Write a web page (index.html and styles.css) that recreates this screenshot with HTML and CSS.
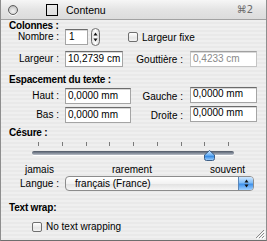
FILE: index.html
```html
<!DOCTYPE html>
<html>
<head>
  <title>Contenu</title>
  <link rel="stylesheet" href="styles.css">
</head>
<body>
  <div class="window">
    <div class="titlebar">
      <span class="collapse"></span>
      <span class="winbox"></span>
      <span class="title">Contenu</span>
      <span class="shortcut">&#8984;2</span>
    </div>

    <div class="panel">
      <div class="heading h-cols">Colonnes :</div>
      <div class="row r-nombre">
        <span class="lbl">Nombre :</span>
        <span class="field f-nombre">1</span>
        <span class="stepper">
          <svg width="9" height="18" viewBox="0 0 9 18">
            <defs>
              <linearGradient id="sg" x1="0" y1="0" x2="1" y2="0">
                <stop offset="0" stop-color="#dcdcdc"/>
                <stop offset="0.5" stop-color="#ffffff"/>
                <stop offset="1" stop-color="#d4d4d4"/>
              </linearGradient>
            </defs>
            <rect x="0.5" y="0.5" width="8" height="17" rx="4" fill="url(#sg)" stroke="#6f6f6f"/>
            <path d="M2.5 7.5 L4.5 4.5 L6.5 7.5 Z" fill="#111"/>
            <path d="M2.5 10.5 L4.5 13.5 L6.5 10.5 Z" fill="#111"/>
          </svg>
        </span>
        <span class="check c-fixe"><span class="box"></span>Largeur fixe</span>
      </div>
      <div class="row r-largeur">
        <span class="lbl">Largeur :</span>
        <span class="cell"><span class="field f-largeur">10,2739 cm</span></span>
        <span class="lbl2">Gouttière :</span>
        <span class="field f-right disabled">0,4233 cm</span>
      </div>

      <div class="heading h-esp">Espacement du texte :</div>
      <div class="row r-haut">
        <span class="lbl">Haut :</span>
        <span class="cell"><span class="field f-left">0,0000 mm</span></span>
        <span class="lbl2">Gauche :</span>
        <span class="field f-right raised">0,0000 mm</span>
      </div>
      <div class="row r-bas">
        <span class="lbl">Bas :</span>
        <span class="cell"><span class="field f-left">0,0000 mm</span></span>
        <span class="lbl2">Droite :</span>
        <span class="field f-right raised">0,0000 mm</span>
      </div>

      <div class="heading h-cesure">Césure :</div>
      <div class="slider">
        <div class="ticks">
          <i></i><i></i><i></i><i></i><i></i><i></i><i></i><i></i><i></i>
        </div>
        <div class="track"></div>
        <svg class="thumb" width="13" height="11" viewBox="0 0 13 11">
          <defs>
            <linearGradient id="tg" x1="0" y1="0" x2="0" y2="1">
              <stop offset="0" stop-color="#d6ecff"/>
              <stop offset="0.45" stop-color="#6fb2f4"/>
              <stop offset="0.6" stop-color="#3c8fe6"/>
              <stop offset="1" stop-color="#a6d4ff"/>
            </linearGradient>
          </defs>
          <path d="M6.5 0.5 L11.5 5 L11.5 8.5 Q11.5 10.5 9.5 10.5 L3.5 10.5 Q1.5 10.5 1.5 8.5 L1.5 5 Z" fill="url(#tg)" stroke="#3d5e86"/>
        </svg>
      </div>
      <div class="scale">
        <span>jamais</span>
        <span>rarement</span>
        <span>souvent</span>
      </div>

      <div class="row r-langue">
        <span class="lbl">Langue :</span>
        <div class="popup">
          <span class="popup-text">français (France)</span>
          <span class="popup-arrow">
            <svg width="5" height="9" viewBox="0 0 5 9">
              <path d="M0.5 3.5 L2.5 0.5 L4.5 3.5 Z" fill="#111"/>
              <path d="M0.5 5.5 L2.5 8.5 L4.5 5.5 Z" fill="#111"/>
            </svg>
          </span>
        </div>
      </div>

      <div class="heading h-wrap">Text wrap:</div>
      <div class="check c-wrap"><span class="box"></span>No text wrapping</div>
    </div>

    <svg class="grip" width="10" height="10" viewBox="0 0 10 10">
      <path d="M9 1 L1 9 M9 4 L4 9 M9 7 L7 9" stroke="#8a8a8a" stroke-width="1"/>
      <path d="M10 2 L2 10 M10 5 L5 10 M10 8 L8 10" stroke="#ffffff" stroke-width="1"/>
    </svg>
  </div>
</body>
</html>
```

FILE: styles.css
```css
body {
  margin: 0;
  font-family: "Liberation Sans", Arial, sans-serif;
  font-size: 10px;
  color: #000;
  background: #fff;
}

.window {
  position: relative;
  width: 267px;
  height: 241px;
  box-sizing: border-box;
  border-left: 1px solid #8e8e8e;
  border-right: 1px solid #8e8e8e;
  border-bottom: 1px solid #6e6e6e;
  background: repeating-linear-gradient(to bottom, #efefef 0, #efefef 2px, #e9e9e9 2px, #e9e9e9 4px);
  overflow: hidden;
}

.titlebar {
  height: 19px;
  border-bottom: 1px solid #a2a2a2;
  background: linear-gradient(to bottom, #f6f6f6, #e4e4e4 50%, #dcdcdc);
  display: flex;
  align-items: center;
  font-size: 10.5px;
}

.collapse {
  width: 8px;
  height: 8px;
  margin-left: 7px;
  border: 1px solid #5e5e5e;
  border-radius: 50%;
  background: radial-gradient(circle at 50% 65%, #f4f4f4 0, #cfcfcf 60%, #9c9c9c 100%);
  box-shadow: 0 1px 0 #fff;
}

.winbox {
  width: 10px;
  height: 10px;
  margin-left: 28px;
  border: 1px solid #000;
}

.title {
  margin-left: 8px;
  flex: 1;
}

.shortcut {
  margin-right: 13px;
  color: #6a6a6a;
  font-family: "DejaVu Sans", sans-serif;
  font-size: 10px;
}

.panel {
  padding-left: 8px;
}

.heading {
  font-weight: bold;
  line-height: 12px;
  letter-spacing: -0.2px;
}

.row {
  display: flex;
  align-items: center;
}

.lbl {
  width: 50px;
  margin-right: 6px;
  text-align: right;
  line-height: 12px;
}

.lbl2 {
  width: 52px;
  margin-right: 7px;
  text-align: right;
}

.cell {
  width: 66px;
}

.field {
  display: block;
  box-sizing: border-box;
  height: 16px;
  line-height: 14px;
  padding-left: 2px;
  border: 1px solid #a4a4a4;
  border-top-color: #6c6c6c;
  background: #fff;
  box-shadow: inset 0 1px 0 #d8d8d8;
  white-space: nowrap;
  overflow: hidden;
}

.f-nombre {
  width: 23px;
  padding-left: 3px;
}

.f-largeur {
  width: 58px;
}

.f-left {
  width: 66px;
}

.f-right {
  width: 67px;
}

.disabled {
  color: #8a8a8a;
  border-color: #c4c4c4;
  border-top-color: #a0a0a0;
}

.raised {
  margin-top: -3px;
  line-height: 12px;
}

.stepper {
  margin-left: 3px;
  height: 18px;
}

.stepper svg {
  display: block;
}

.check {
  display: flex;
  align-items: center;
}

.box {
  width: 8px;
  height: 8px;
  margin-right: 4px;
  border: 1px solid #6f6f6f;
  border-radius: 2px;
  background: linear-gradient(to bottom, #ffffff, #e6e6e6 60%, #f4f4f4);
}

.c-fixe {
  margin-left: 28px;
}

.h-cols {
  margin-top: 0;
}

.r-nombre {
  height: 18px;
  margin-top: -4px;
}

.r-largeur {
  margin-top: 5px;
}

.h-esp {
  margin-top: 7px;
}

.r-haut {
  margin-top: 2px;
}

.r-bas {
  margin-top: 3px;
}

.h-cesure {
  margin-top: 4px;
}

.slider {
  position: relative;
  height: 22px;
  margin-left: 23px;
  width: 202px;
}

.ticks {
  display: flex;
  justify-content: space-between;
  margin: 3px 5px 0 6px;
  height: 4px;
}

.ticks i {
  width: 1px;
  height: 4px;
  background: #7a7a7a;
}

.track {
  margin-top: 5px;
  height: 4px;
  border-radius: 2px;
  background: linear-gradient(to bottom, #4e5663, #7f8896 50%, #b9bec6);
  box-shadow: 0 1px 0 #fff;
}

.thumb {
  position: absolute;
  left: 171px;
  top: 8px;
}

.scale {
  display: flex;
  justify-content: space-between;
  width: 220px;
  margin-left: 16px;
  line-height: 12px;
}

.r-langue {
  margin-top: 0;
}

.popup {
  display: flex;
  align-items: center;
  box-sizing: border-box;
  width: 189px;
  height: 15px;
  border: 1px solid #8c8c8c;
  border-radius: 4px;
  background: linear-gradient(to bottom, #ffffff, #f2f2f2 50%, #e2e2e2 55%, #f6f6f6);
  overflow: hidden;
}

.popup-text {
  flex: 1;
  padding-left: 9px;
}

.popup-arrow {
  width: 14px;
  height: 13px;
  display: flex;
  align-items: center;
  justify-content: center;
  border-left: 1px solid #5a86b8;
  background: linear-gradient(to bottom, #cfe7ff, #7fbcf6 45%, #3f91ea 55%, #9fd0ff);
}

.popup-arrow svg {
  display: block;
}

.h-wrap {
  margin-top: 11px;
}

.c-wrap {
  margin-left: 23px;
  margin-top: 7px;
  line-height: 12px;
}

.grip {
  position: absolute;
  right: 1px;
  bottom: 1px;
}
```
